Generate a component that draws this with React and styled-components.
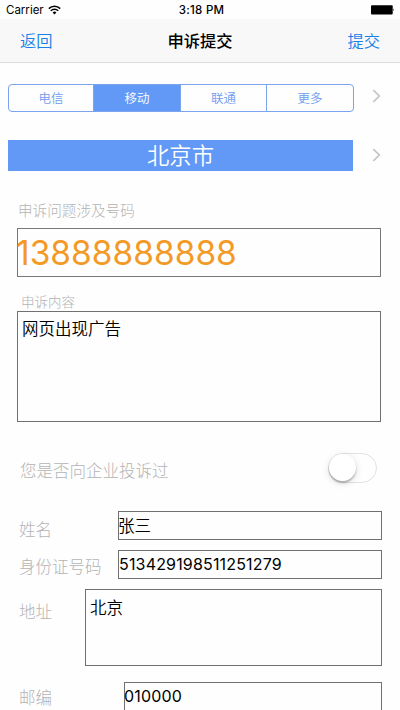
import { useState } from "react";
import styled, { createGlobalStyle } from "styled-components";

const carriers = ["电信", "移动", "联通", "更多"];

const App = () => {
  const [carrier, setCarrier] = useState("移动");
  const [complained, setComplained] = useState(false);

  return (
    <Screen>
      <GlobalStyle />
      <StatusBar>
        <Carrier>
          Carrier
          <svg width="13" height="10" viewBox="0 0 13 10">
            <path d="M0.8 3.6a8 8 0 0 1 11.4 0M2.8 5.8a5.2 5.2 0 0 1 7.4 0" fill="none" stroke="#000" strokeWidth="1.5" />
            <path d="M4.6 7.4a2.7 2.7 0 0 1 3.8 0L6.5 9.4z" fill="#000" />
          </svg>
        </Carrier>
        <Time>3:18 PM</Time>
        <Battery>
          <svg width="24" height="10" viewBox="0 0 24 10">
            <rect x="0" y="0.3" width="21.7" height="9.2" rx="1" fill="#000" />
            <path d="M22.4 3.2q1.2 1.6 0 3.2z" fill="#000" />
          </svg>
        </Battery>
      </StatusBar>

      <NavBar>
        <NavButton>返回</NavButton>
        <Title>申诉提交</Title>
        <NavButton $right>提交</NavButton>
      </NavBar>

      <PickerRow $top={21} $height={28}>
        <Segments>
          {carriers.map((name) => (
            <Segment key={name} $active={name === carrier} onClick={() => setCarrier(name)}>
              {name}
            </Segment>
          ))}
        </Segments>
        <Arrow $top={-5} />
      </PickerRow>

      <PickerRow $top={28} $height={31}>
        <City>北京市</City>
        <Arrow $top={-1} />
      </PickerRow>

      <Section>
        <Label $top={30} $left={1} $height={20} $size={14.6}>申诉问题涉及号码</Label>
        <PhoneBox>13888888888</PhoneBox>
        <Label $top={16} $left={4} $height={18} $size={13.5}>申诉内容</Label>
        <TextBox $height={111} $left={4} $top={7}>网页出现广告</TextBox>
      </Section>

      <SwitchRow>
        <FieldLabel $offset={5}>您是否向企业投诉过</FieldLabel>
        <Switch onClick={() => setComplained(!complained)}>
          <Thumb $on={complained} />
        </Switch>
      </SwitchRow>

      <Field $label={99} $gap={10} $offset={9}>
        <FieldLabel>姓名</FieldLabel>
        <TextBox $height={29} $top={4} $left={-1}>张三</TextBox>
      </Field>
      <Field $label={99} $gap={10} $offset={7}>
        <FieldLabel>身份证号码</FieldLabel>
        <TextBox $height={29} $top={3} $left={0}>
          <Digits>513429198511251279</Digits>
        </TextBox>
      </Field>
      <Field $label={66} $gap={16} $offset={13}>
        <FieldLabel>地址</FieldLabel>
        <TextBox $height={77} $left={4} $top={8}>北京</TextBox>
      </Field>
      <Field $label={105} $gap={0} $offset={6}>
        <FieldLabel>邮编</FieldLabel>
        <TextBox $height={29} $top={3} $left={-1}>
          <Digits>010000</Digits>
        </TextBox>
      </Field>
    </Screen>
  );
};

const Arrow = ({ $top }) => (
  <ArrowWrap $top={$top}>
    <svg width="9" height="14" viewBox="0 0 9 14">
      <path d="M1.3 1.2L7.3 7l-6 5.8" fill="none" stroke="#c3c3c7" strokeWidth="1.6" />
    </svg>
  </ArrowWrap>
);

export default App;

const GlobalStyle = createGlobalStyle`
  * {
    box-sizing: border-box;
  }
  body {
    margin: 0;
    background: #fff;
    font-family: Inter, "Noto Sans CJK SC", sans-serif;
  }
`;

const Screen = styled.div`
  width: 400px;
  height: 710px;
  overflow: hidden;
  background: #fefefe;
  color: #000;
`;

const StatusBar = styled.div`
  display: grid;
  grid-template-columns: 1fr auto 1fr;
  align-items: center;
  height: 19px;
  padding: 1px 5px 0 6px;
  font-size: 11.5px;
`;

const Carrier = styled.div`
  display: flex;
  align-items: center;
  gap: 4px;
`;

const Time = styled.div`
  font-weight: 500;
  font-size: 11.5px;
  letter-spacing: 0.3px;
  padding-left: 2px;
`;

const Battery = styled.div`
  display: flex;
  justify-content: flex-end;
`;

const NavBar = styled.div`
  display: grid;
  grid-template-columns: 1fr auto 1fr;
  align-items: center;
  height: 44px;
  padding: 0 20px;
  background: #f8f8f8;
  border-bottom: 1px solid #dcdcdc;
`;

const NavButton = styled.div`
  color: #1580e8;
  font-size: 16.3px;
  line-height: 24px;
  font-weight: 350;
  text-align: ${(p) => (p.$right ? "right" : "left")};
  cursor: pointer;
`;

const Title = styled.div`
  font-size: 16.3px;
  line-height: 24px;
  font-weight: 500;
`;

const PickerRow = styled.div`
  display: flex;
  height: ${(p) => p.$height}px;
  margin: ${(p) => p.$top}px 19px 0 8px;
  justify-content: space-between;
  align-items: center;
`;

const Segments = styled.div`
  display: grid;
  grid-template-columns: 84px 87px 86px 1fr;
  width: 346px;
  height: 28px;
  border: 1px solid #7ba3ee;
  border-radius: 4px;
  overflow: hidden;
`;

const Segment = styled.div`
  display: flex;
  align-items: center;
  justify-content: center;
  padding-bottom: 1px;
  font-size: 12.5px;
  font-weight: 350;
  color: ${(p) => (p.$active ? "#fff" : "#6f9cee")};
  background: ${(p) => (p.$active ? "#6299f6" : "transparent")};
  cursor: pointer;

  & + & {
    border-left: 1px solid #7ba3ee;
  }
`;

const City = styled.div`
  width: 345px;
  height: 31px;
  line-height: 31px;
  background: #6299f6;
  color: #fff;
  font-size: 22.3px;
  font-weight: 350;
  text-align: center;
`;

const ArrowWrap = styled.div`
  display: flex;
  margin-top: ${(p) => p.$top}px;
`;

const Section = styled.div`
  margin: 0 19px 0 17px;
`;

const Label = styled.div`
  margin-top: ${(p) => p.$top}px;
  padding-left: ${(p) => p.$left}px;
  height: ${(p) => p.$height}px;
  line-height: ${(p) => p.$height}px;
  font-size: ${(p) => p.$size}px;
  font-weight: 300;
  color: #b4b4b4;
`;

const PhoneBox = styled.div`
  height: 49px;
  margin-top: 7px;
  border: 1px solid #777;
  color: #f39a26;
  font-size: 33.5px;
  line-height: 48px;
  text-indent: -2px;
  white-space: nowrap;
`;

const TextBox = styled.div`
  height: ${(p) => p.$height}px;
  padding-top: ${(p) => p.$top}px;
  text-indent: ${(p) => p.$left}px;
  border: 1px solid #707070;
  font-size: 16.5px;
  line-height: 20px;
  font-weight: 350;
`;

const Digits = styled.span`
  font-size: 16px;
  font-weight: 400;
  letter-spacing: 0.17px;
  white-space: nowrap;
`;

const FieldLabel = styled.div`
  padding-top: ${(p) => p.$offset || 0}px;
  font-size: 16.5px;
  line-height: 20px;
  font-weight: 300;
  color: #b4b4b4;
`;

const SwitchRow = styled.div`
  display: flex;
  justify-content: space-between;
  align-items: center;
  height: 30px;
  margin: 31px 23px 28px 20px;
`;

const Switch = styled.div`
  width: 49px;
  height: 30px;
  border: 1.5px solid #e2e2e2;
  border-radius: 15px;
  cursor: pointer;
`;

const Thumb = styled.div`
  width: 27px;
  height: 27px;
  margin-left: ${(p) => (p.$on ? 20 : 0)}px;
  border-radius: 50%;
  background: #fff;
  box-shadow: 0 2px 2px rgba(0, 0, 0, 0.25), 0 2px 8px rgba(0, 0, 0, 0.12);
`;

const Field = styled.div`
  display: grid;
  grid-template-columns: ${(p) => p.$label}px 1fr;
  margin: 0 18px ${(p) => p.$gap}px 19px;

  ${FieldLabel} {
    padding-top: ${(p) => p.$offset}px;
  }
`;
